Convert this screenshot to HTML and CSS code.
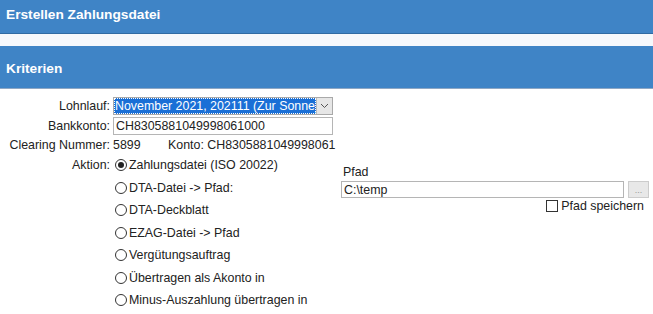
FILE: index.html
```html
<!DOCTYPE html>
<html lang="de">
<head>
    <meta charset="UTF-8">
    <title>Erstellen Zahlungsdatei</title>
    <link rel="stylesheet" href="styles.css">
</head>
<body>
    <div class="page-title">Erstellen Zahlungsdatei</div>
    <div class="spacer"></div>
    <div class="section-title">Kriterien</div>

    <div class="form">
        <div class="row row-lohnlauf">
            <label class="label">Lohnlauf:</label>
            <div class="select">
                <span class="select-value">November 2021, 202111 (Zur Sonne)</span>
                <span class="select-arrow">
                    <svg width="9" height="6" viewBox="0 0 9 6"><path d="M1 1l3.5 3.5L8 1" fill="none" stroke="#555" stroke-width="1"/></svg>
                </span>
            </div>
        </div>
        <div class="row row-bank">
            <label class="label">Bankkonto:</label>
            <input class="text-input bank" type="text" value="CH8305881049998061000">
        </div>
        <div class="row row-clearing">
            <span class="label">Clearing Nummer:</span>
            <span class="value clearing">5899</span>
            <span class="value">Konto: CH8305881049998061</span>
        </div>
        <div class="row action-row">
            <span class="label">Aktion:</span>
            <div class="actions">
                <label class="radio"><span class="dot checked"></span>Zahlungsdatei (ISO 20022)</label>
                <label class="radio"><span class="dot"></span>DTA-Datei -&gt; Pfad:</label>
                <label class="radio"><span class="dot"></span>DTA-Deckblatt</label>
                <label class="radio"><span class="dot"></span>EZAG-Datei -&gt; Pfad</label>
                <label class="radio"><span class="dot"></span>Vergütungsauftrag</label>
                <label class="radio"><span class="dot"></span>Übertragen als Akonto in</label>
                <label class="radio"><span class="dot"></span>Minus-Auszahlung übertragen in</label>
            </div>
            <div class="path-box">
                <div class="path-label">Pfad</div>
                <div class="path-row">
                    <input class="text-input path" type="text" value="C:\temp">
                    <button class="browse">...</button>
                </div>
                <label class="save-path"><span class="check"></span>Pfad speichern</label>
            </div>
        </div>
    </div>
</body>
</html>
```

FILE: styles.css
```css
body {
    margin: 0;
    font-family: "Liberation Sans", Arial, sans-serif;
    font-size: 12.4px;
    color: #222;
    background: #fff;
}

.page-title,
.section-title {
    background: #3f84c6;
    color: #fff;
    font-weight: bold;
    font-size: 13.7px;
    padding-left: 6px;
}
.page-title {
    height: 33px;
    line-height: 29px;
    border-bottom: 1px solid #2f6aa3;
}
.spacer {
    height: 12px;
    background: #f5f8fc;
}
.section-title {
    height: 42px;
    line-height: 46px;
    border-bottom: 1px solid #8ea7c4;
}

.form {
    padding-top: 7px;
}
.row {
    display: flex;
    align-items: center;
}
.row-lohnlauf {
    height: 19px;
}
.row-bank {
    height: 21px;
}
.row-clearing {
    height: 18px;
}
.label {
    width: 110px;
    text-align: right;
    padding-right: 3px;
    flex-shrink: 0;
}

.select {
    width: 218px;
    height: 16px;
    border: 1px solid #a9a9a9;
    display: flex;
    align-items: center;
}
.select-value {
    flex: 1;
    background: #1a6fd6;
    color: #fff;
    outline: 1px dotted #fff;
    outline-offset: -1px;
    white-space: nowrap;
    overflow: hidden;
    line-height: 16px;
    height: 16px;
    padding-left: 1px;
}
.select-arrow {
    width: 15px;
    height: 16px;
    background: #e6e6e6;
    border-left: 1px solid #bbb;
    display: flex;
    align-items: center;
    justify-content: center;
}

.text-input {
    font-family: inherit;
    font-size: 12.4px;
    color: #222;
    border: 1px solid #b5b5b5;
    height: 17px;
    padding: 0 2px;
    margin: 0;
    box-sizing: border-box;
}
.bank {
    width: 220px;
    height: 18px;
}

.value {
    color: #222;
}
.clearing {
    width: 55px;
}

.action-row {
    align-items: flex-start;
}
.action-row .label {
    line-height: 22px;
}
.actions {
    display: flex;
    flex-direction: column;
    width: 228px;
}
.radio {
    display: flex;
    align-items: center;
    height: 22.5px;
}
.dot {
    width: 10px;
    height: 10px;
    border: 1px solid #333;
    border-radius: 50%;
    margin-left: 2px;
    margin-right: 2px;
    position: relative;
}
.dot.checked::after {
    content: "";
    position: absolute;
    left: 2px;
    top: 2px;
    width: 6px;
    height: 6px;
    border-radius: 50%;
    background: #222;
}

.path-box {
    padding-top: 11px;
    display: flex;
    flex-direction: column;
}
.path-label {
    padding-left: 2px;
    height: 16px;
    line-height: 14px;
}
.path-row {
    display: flex;
    gap: 4px;
}
.path {
    width: 283px;
}
.browse {
    width: 21px;
    height: 17px;
    font-size: 9px;
    color: #999;
    background: #e8e8e8;
    border: 1px solid #ccc;
    padding: 0;
    line-height: 10px;
}
.save-path {
    align-self: flex-end;
    display: flex;
    align-items: center;
    margin-top: 1px;
    margin-right: 5px;
}
.check {
    width: 10px;
    height: 10px;
    border: 1px solid #333;
    margin-right: 3px;
}
```
